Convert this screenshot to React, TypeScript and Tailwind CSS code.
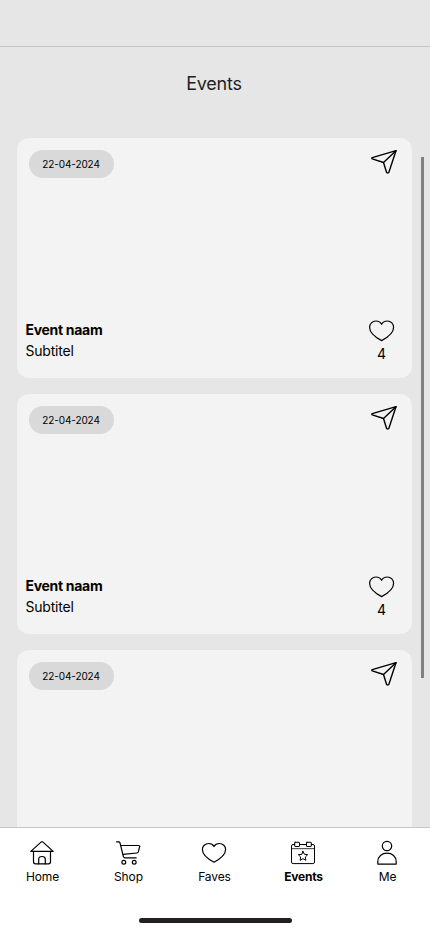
import { ReactNode } from 'react';

interface EventItem {
  id: number;
  date: string;
  title: string;
  subtitle: string;
  likes: number;
}

const events: EventItem[] = [
  { id: 1, date: '22-04-2024', title: 'Event naam', subtitle: 'Subtitel', likes: 4 },
  { id: 2, date: '22-04-2024', title: 'Event naam', subtitle: 'Subtitel', likes: 4 },
  { id: 3, date: '22-04-2024', title: 'Event naam', subtitle: 'Subtitel', likes: 4 },
];

function Icon({ children }: { children: ReactNode }) {
  return (
    <svg
      className="block w-7 h-7 shrink-0"
      viewBox="0 0 28 28"
      fill="none"
      stroke="currentColor"
      strokeWidth="1.2"
      strokeLinecap="round"
      strokeLinejoin="round"
    >
      {children}
    </svg>
  );
}

function SendIcon() {
  return (
    <Icon>
      <path d="M26 2.7 2.3 9.7c-.7.3-.7.9 0 1.2l11.2 3.6 3.2 10.2c.1.4 1.9.4 2 0Z" strokeWidth="1.4" />
      <path d="M26 2.7 13.5 14.5" strokeWidth="1.4" />
    </Icon>
  );
}

function HeartIcon() {
  return (
    <Icon>
      <path d="M13.6 7.3C12.5 5.1 10.3 4 7.9 4 4.2 4 1.6 6.8 1.6 10.4c0 5.6 6 9.9 12 13.2 6-3.3 12-7.6 12-13.2C25.6 6.8 23 4 19.3 4c-2.4 0-4.6 1.1-5.7 3.3Z" />
    </Icon>
  );
}

function HomeIcon() {
  return (
    <Icon>
      <path d="M2.8 12.4 13.3 2.9q.7-.6 1.4 0l10.5 9.5Z" />
      <path d="M5.5 12.4v10.4q0 2 2 2h13q2 0 2-2V12.4" />
      <path d="M10.7 24.8v-4.6q0-2.7 3.3-2.7t3.3 2.7v4.6" />
    </Icon>
  );
}

function CartIcon() {
  return (
    <Icon>
      <path d="M2.5 2.8h2.2q1 0 1.3 1l3.4 13.7q.4 1.3 1.6 1.3h11.2" />
      <path d="M7 6.5h17.9q1 0 .8 1l-1.4 5.4q-.3 1-1.3 1.1L9.1 15.4" />
      <circle cx="9.8" cy="23.2" r="1.9" />
      <circle cx="20.2" cy="23.2" r="1.9" />
    </Icon>
  );
}

function FavesIcon() {
  return (
    <Icon>
      <path d="M14 7.5C13 5.6 10.9 4.5 8.7 4.5c-3.7 0-6.3 2.7-6.3 6.1 0 5.2 5.6 9.5 11.6 12.6 6-3.1 11.6-7.4 11.6-12.6 0-3.4-2.6-6.1-6.3-6.1-2.2 0-4.3 1.1-5.3 3Z" />
    </Icon>
  );
}

function CalendarIcon() {
  return (
    <Icon>
      <g strokeWidth="1">
        <path d="M5.7 5.5H4q-1.5 0-1.5 1.5v16q0 1.6 1.6 1.6h19.8q1.6 0 1.6-1.6V7q0-1.5-1.5-1.5h-1.7M10.5 5.5h7" />
        <path d="M2.5 9.7h23" strokeWidth=".8" />
        <rect x="5.7" y="3.3" width="4.8" height="4.2" rx=".4" />
        <rect x="17.5" y="3.3" width="4.8" height="4.2" rx=".4" />
        <path d="m14 12.3 1.4 3 3.3.4-2.4 2.3.6 3.3-2.9-1.6-2.9 1.6.6-3.3-2.4-2.3 3.3-.4Z" />
      </g>
    </Icon>
  );
}

function UserIcon() {
  return (
    <Icon>
      <circle cx="14" cy="7" r="4.7" />
      <path d="M4.8 25.1v-2.5c0-5 4-8.4 9.2-8.4s9.2 3.4 9.2 8.4v2.5Z" />
    </Icon>
  );
}

const tabs = [
  { label: 'Home', icon: <HomeIcon />, width: 'w-[84px]' },
  { label: 'Shop', icon: <CartIcon />, width: 'w-[88px]' },
  { label: 'Faves', icon: <FavesIcon />, width: 'w-[84px]' },
  { label: 'Events', icon: <CalendarIcon />, width: 'w-[94px]' },
  { label: 'Me', icon: <UserIcon />, width: 'w-[74px]' },
];

function EventCard({ event }: { event: EventItem }) {
  return (
    <article className="flex flex-col justify-between shrink-0 h-60 rounded-xl bg-[#f3f3f3]">
      <div className="flex items-start justify-between pt-3 pl-[11.5px] pr-[14px]">
        <span className="flex items-center justify-center w-[85px] h-7 rounded-full bg-[#d9d9d9] text-[10px] tracking-[-0.1px]">
          {event.date}
        </span>
        <button className="-mt-[2px]">
          <SendIcon />
        </button>
      </div>
      <div className="flex items-end justify-between pl-[8.5px] pr-[16px] pb-[14px]">
        <div className="text-sm leading-[21px] pb-[3px]">
          <h2 className="font-bold tracking-[-0.3px]">{event.title}</h2>
          <p className="tracking-[-0.2px]">{event.subtitle}</p>
        </div>
        <button className="flex flex-col items-center">
          <HeartIcon />
          <span className="text-sm leading-5 -mt-[1px] pr-px">{event.likes}</span>
        </button>
      </div>
    </article>
  );
}

export default function App() {
  return (
    <div className="relative flex flex-col w-[430px] h-[932px] overflow-hidden bg-[#e6e6e6] text-black font-['Inter',sans-serif]">
      <header className="shrink-0 h-[47px] border-b border-[#c6c6c6]" />

      <main className="flex-1 min-h-0 overflow-hidden">
        <h1 className="h-[91px] pt-[23px] pr-[2px] text-center text-lg leading-7 tracking-[-0.2px] text-[#231f20]">
          Events
        </h1>
        <div className="flex flex-col gap-4 pl-[17px] pr-[18px]">
          {events.map(event => (
            <EventCard key={event.id} event={event} />
          ))}
        </div>
      </main>

      {/* Scroll indicator */}
      <div className="absolute right-[6px] top-[157px] w-[3px] h-[521px] bg-[#808080]" />

      {/* Tab bar */}
      <nav className="flex flex-col shrink-0 h-[105px] border-t border-[#c6c6c6] bg-white">
        <div className="flex pt-[11px]">
          {tabs.map(tab => (
            <button key={tab.label} className={`flex flex-col items-center ${tab.width}`}>
              {tab.icon}
              <span
                className={`text-xs leading-4 mt-[2px] pl-px ${tab.label === 'Events' ? 'font-bold tracking-[-0.2px]' : 'tracking-[-0.1px]'}`}
              >
                {tab.label}
              </span>
            </button>
          ))}
        </div>
        <div className="w-[153px] h-[5px] mt-auto mb-[9px] mx-auto rounded-full bg-[#231f20]" />
      </nav>
    </div>
  );
}
